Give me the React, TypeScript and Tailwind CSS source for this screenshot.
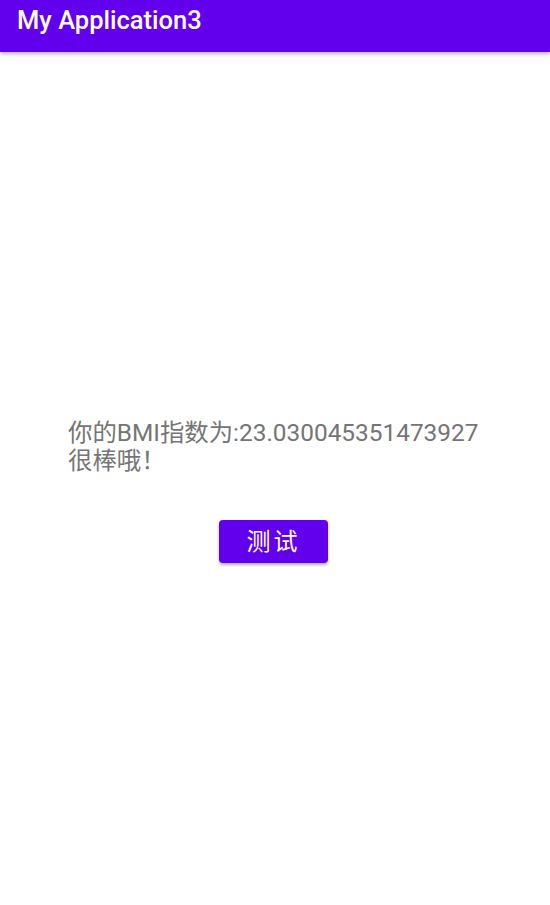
export default function App() {
  return (
    <div className="min-h-[905px] w-[550px] bg-white font-['Roboto','Noto_Sans_CJK_SC',sans-serif]">
      <header className="h-[52px] bg-[#6200EE] pl-[17px] pt-[2px] shadow-[0_2px_4px_rgba(0,0,0,0.3)]">
        <h1 className="text-[25.5px] font-medium leading-[36px] text-white">My Application3</h1>
      </header>

      <main className="flex flex-col items-center pt-[367px]">
        <p className="ml-[-2px] w-[412px] text-[24.4px] leading-[28px] text-[#757575]">
          你的BMI指数为:23.030045351473927
          <br />
          很棒哦！
        </p>
        <button className="ml-[-3px] mt-[45px] flex h-[43px] w-[109px] items-center justify-center rounded-[4px] bg-[#6200EE] text-[24px] tracking-[3px] text-white shadow-[0_2px_3px_rgba(0,0,0,0.3)]">
          测试
        </button>
      </main>
    </div>
  );
}
